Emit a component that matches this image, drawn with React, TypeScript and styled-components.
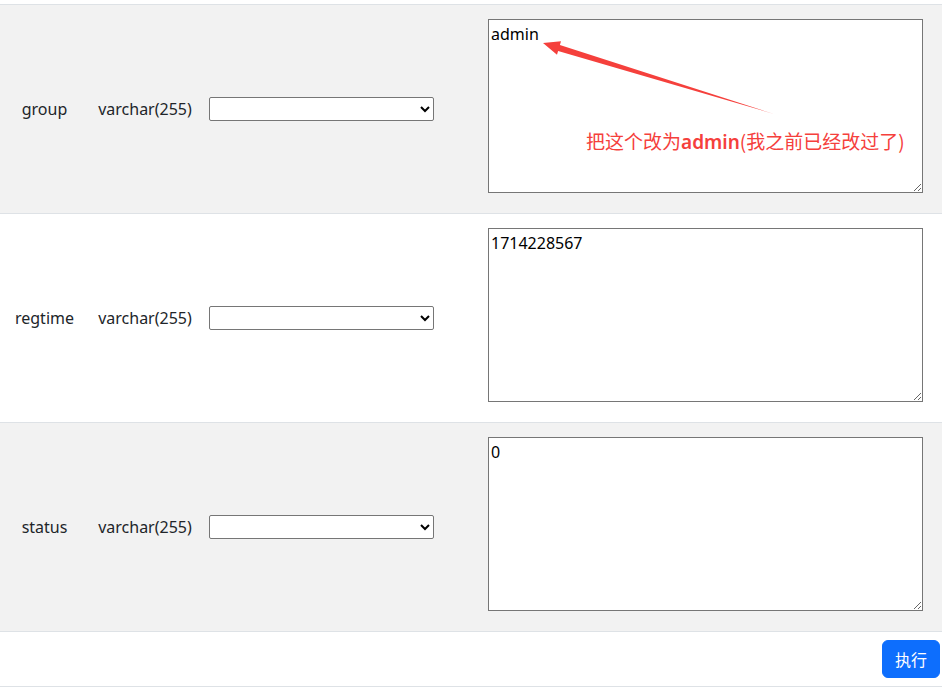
import React from "react";
import styled, { createGlobalStyle } from "styled-components";

const GlobalStyle = createGlobalStyle`
  html, body {
    margin: 0;
    padding: 0;
    background: #ffffff;
  }
  body {
    font-family: "Noto Sans", "Noto Sans CJK SC", sans-serif;
    font-size: 16px;
    color: #212529;
  }
`;

const Page = styled.div`
  width: 942px;
  padding-top: 4px;
`;

const Table = styled.div`
  display: flex;
  flex-direction: column;
  border-top: 1px solid #dee2e6;
`;

const Row = styled.div<{ $striped: boolean }>`
  position: relative;
  display: grid;
  grid-template-columns: 89px 112px 240px 1fr;
  align-items: center;
  height: 208px;
  background: ${(p) => (p.$striped ? "#f2f2f2" : "#ffffff")};
  border-bottom: 1px solid #dee2e6;
`;

const NameCell = styled.div`
  text-align: center;
  line-height: 24px;
`;

const TypeCell = styled.div`
  text-align: center;
  line-height: 24px;
`;

const SelectCell = styled.div`
  padding-left: 8px;
  display: flex;
  align-items: center;
`;

const FieldSelect = styled.select`
  width: 225px;
  height: 24px;
  box-sizing: border-box;
  border: 1px solid #767676;
  border-radius: 2px;
  background: #ffffff;
  font-family: inherit;
  font-size: 13px;
`;

const ValueCell = styled.div`
  align-self: start;
  padding-top: 14px;
  padding-left: 47px;
`;

const ValueArea = styled.textarea`
  display: block;
  width: 435px;
  height: 174px;
  box-sizing: border-box;
  margin: 0;
  padding: 2px;
  border: 1px solid #767676;
  border-radius: 0;
  font-family: "Noto Sans", "Noto Sans CJK SC", sans-serif;
  font-size: 16px;
  line-height: 24px;
  color: #000000;
  background: #ffffff;
`;

const ActionRow = styled.div`
  display: flex;
  justify-content: flex-end;
  padding: 8px 2px 8px 0;
  border-bottom: 1px solid #dee2e6;
`;

const RunButton = styled.button`
  height: 38px;
  padding: 0 12px;
  border: 1px solid #0d6efd;
  border-radius: 6px;
  background: #0d6efd;
  color: #ffffff;
  font-family: "Noto Sans CJK SC", sans-serif;
  font-size: 16px;
  line-height: 24px;
  cursor: pointer;
`;

const ArrowSvg = styled.svg`
  position: absolute;
  left: 0;
  top: 0;
  pointer-events: none;
`;

const Note = styled.div`
  position: absolute;
  left: 586px;
  top: 123px;
  color: #f5403c;
  font-family: "Noto Sans CJK SC", sans-serif;
  font-size: 19px;
  line-height: 26px;
  white-space: nowrap;
  pointer-events: none;
`;

const NoteLatin = styled.span`
  font-family: "Noto Sans", "Noto Sans CJK SC", sans-serif;
  font-weight: 600;
`;

type Field = { name: string; type: string; value: string };

const fields: Field[] = [
  { name: "group", type: "varchar(255)", value: "admin" },
  { name: "regtime", type: "varchar(255)", value: "1714228567" },
  { name: "status", type: "varchar(255)", value: "0" },
];

export default function App() {
  return (
    <>
      <GlobalStyle />
      <Page>
        <Table>
          {fields.map((f, i) => (
            <Row key={f.name} $striped={i % 2 === 0}>
              <NameCell>{f.name}</NameCell>
              <TypeCell>{f.type}</TypeCell>
              <SelectCell>
                <FieldSelect defaultValue="">
                  <option value=""></option>
                </FieldSelect>
              </SelectCell>
              <ValueCell>
                <ValueArea defaultValue={f.value} />
              </ValueCell>
              {i === 0 && (
                <>
                  <ArrowSvg width="942" height="208" viewBox="0 5 942 208">
                    <polygon
                      points="543,43 561,41.3 559.9,45.1 774,114 558.1,50.9 557,54.7"
                      fill="#f5403c"
                    />
                  </ArrowSvg>
                  <Note>
                    把这个改为<NoteLatin>admin</NoteLatin>(我之前已经改过了)
                  </Note>
                </>
              )}
            </Row>
          ))}
          <ActionRow>
            <RunButton>执行</RunButton>
          </ActionRow>
        </Table>
      </Page>
    </>
  );
}
